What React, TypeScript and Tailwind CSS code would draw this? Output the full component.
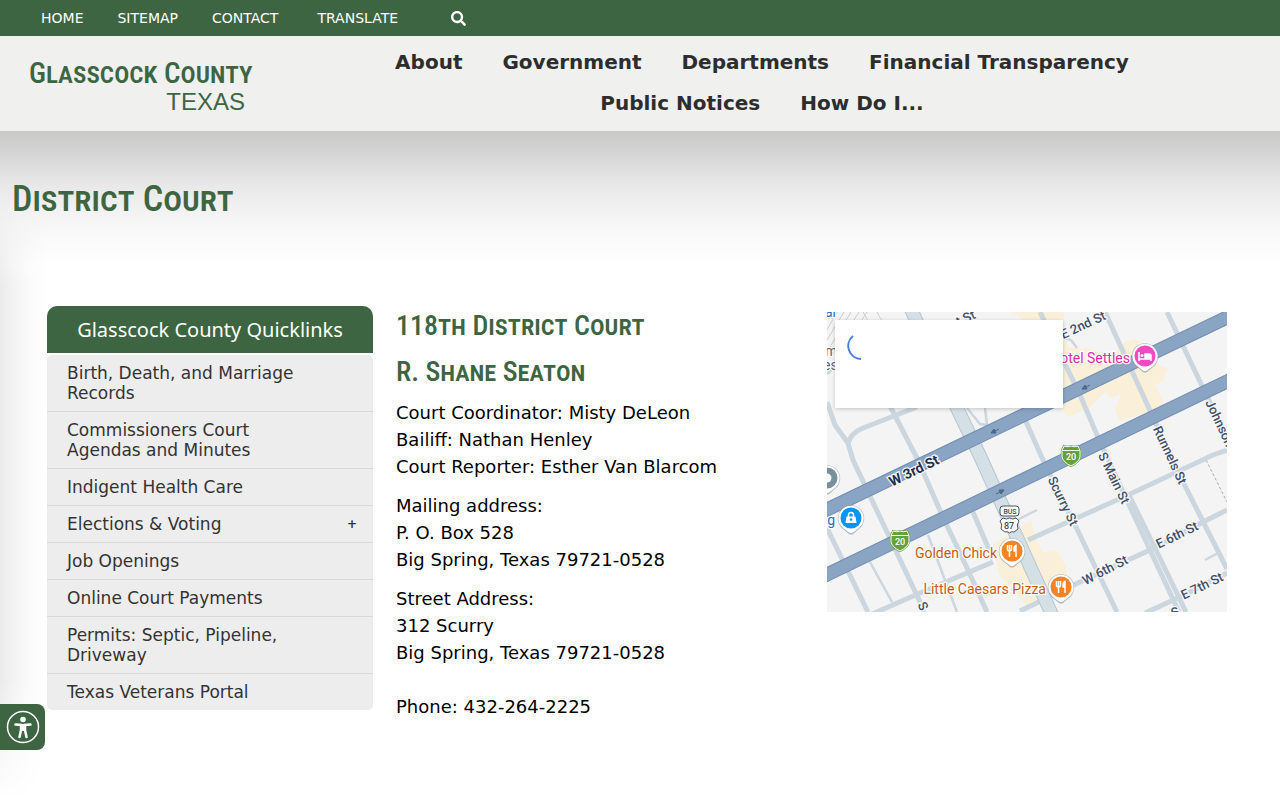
import { FaSearch } from 'react-icons/fa';

const topLinks = [
  { label: 'HOME', className: 'ml-[41px]' },
  { label: 'SITEMAP', className: 'ml-[34px]' },
  { label: 'CONTACT', className: 'ml-[34px]' },
  { label: 'TRANSLATE', className: 'ml-[39px]' },
];

const navLinks = [
  'About',
  'Government',
  'Departments',
  'Financial Transparency',
  'Public Notices',
  'How Do I...',
];

const quicklinks = [
  { label: 'Birth, Death, and Marriage Records' },
  { label: 'Commissioners Court Agendas and Minutes' },
  { label: 'Indigent Health Care' },
  { label: 'Elections & Voting', expandable: true },
  { label: 'Job Openings' },
  { label: 'Online Court Payments' },
  { label: 'Permits: Septic, Pipeline, Driveway' },
  { label: 'Texas Veterans Portal' },
];

const streets = [
  'M0 90L8 113L21 131L26 148L93 290L97 300',
  'M21 131Q24 121 36 116L90 95',
  'M63 94L91 148L115 203L140 256L160 300',
  'M0 216L18 253L41 300',
  'M196 103L216 148L248 213L290 300',
  'M213 0L253 83L273 130L323 238L352 300',
  'M301 181L327 234L359 300',
  'M278 0L325 103L356 170L393 243L400 257',
  'M340 0L376 76L400 126',
  'M43 303L93 281L166 250',
  'M201 228L301 183L386 143L400 138',
  'M193 299L253 270L323 238L380 208L400 198',
  'M318 301L353 285L400 261',
  'M146 200L166 247',
];

const alleys = [
  'M43 250L65 290',
  'M101 223L130 300',
  'M140 96L153 112L160 113L158 96',
  'M0 62L14 50',
  'M378 248L391 241',
  'M190 208L210 198',
  'M236 26L244 28L250 36',
];

function Header() {
  return (
    <header>
      <div className="flex h-9 items-center bg-[#3d6542] text-sm text-white">
        {topLinks.map((link) => (
          <a key={link.label} href="#" className={link.className}>
            {link.label}
          </a>
        ))}
        <button type="button" aria-label="Search" className="ml-[53px]">
          <FaSearch size={15} />
        </button>
      </div>
      <div className="flex h-[95px] bg-[#f0f0ee]">
        <a
          href="#"
          className="ml-[29px] mt-[18px] flex w-[219px] shrink-0 flex-col items-end text-[#3d6542]"
        >
          <span className="self-start whitespace-nowrap font-['Roboto_Condensed','Liberation_Sans',sans-serif] text-[29px] font-medium leading-[38px] [font-variant-caps:small-caps]">
            Glasscock County
          </span>
          <span className="mr-[3px] font-['Liberation_Sans',sans-serif] text-2xl leading-5">TEXAS</span>
        </a>
        <nav className="mx-auto flex max-w-[800px] flex-wrap content-start justify-center gap-x-10 pl-4 pr-5 pt-[6px] text-xl font-bold leading-[41px] text-[#2d2d2d]">
          {navLinks.map((label) => (
            <a key={label} href="#">
              {label}
            </a>
          ))}
        </nav>
      </div>
    </header>
  );
}

function Quicklinks() {
  return (
    <aside className="w-[326px] shrink-0">
      <h2 className="rounded-t-[10px] bg-[#3d6542] text-center font-['Noto_Sans',sans-serif] text-xl leading-[47px] text-white">
        Glasscock County Quicklinks
      </h2>
      <ul className="mt-[2px] rounded-[5px] bg-[#ededed] text-[17px] leading-5 text-[#333]">
        {quicklinks.map((link) => (
          <li key={link.label} className="border-b border-[#d9d9d9] last:border-b-0">
            <a href="#" className="flex items-center justify-between py-2 pl-5 pr-4">
              <span className="max-w-[246px]">{link.label}</span>
              {link.expandable && <span className="text-xs font-bold">+</span>}
            </a>
          </li>
        ))}
      </ul>
    </aside>
  );
}

function Pin({ x, y, color, children }: { x: number; y: number; color: string; children?: React.ReactNode }) {
  return (
    <g transform={`translate(${x} ${y})`}>
      <path d="M-8 11L-2 16Q0 17 2 16L8 11A13.200 13.200 0 1 0 -8 11Z" fill="#8f9aa6" opacity=".7" />
      <path d="M-8 10L-2 14.500Q0 16 2 14.500L8 10A12.600 12.600 0 1 0 -8 10Z" fill="#fff" />
      <circle r="10.500" fill={color} />
      {children}
    </g>
  );
}

function Fork() {
  return (
    <g stroke="#fff" strokeWidth="1.500" fill="none">
      <path d="M-4.500 -6V-2Q-4.500 0 -2.500 0T-.5 -2V-6M-2.500 -6V6" />
      <path d="M4 6V-5.500Q2 -5 2 -2V0H4" fill="#fff" />
    </g>
  );
}

function Shield({ x, y }: { x: number; y: number }) {
  return (
    <g transform={`translate(${x} ${y})`}>
      <path
        d="M-7 -9Q-3 -7.500 0 -9Q3 -7.500 7 -9Q10 -5 9 2Q8 7 0 11Q-8 7 -9 2Q-10 -5 -7 -9Z"
        fill="#66a03f"
        stroke="#66a03f"
        strokeWidth="2"
      />
      <path
        d="M-7 -9Q-3 -7.500 0 -9Q3 -7.500 7 -9Q10 -5 9 2Q8 7 0 11Q-8 7 -9 2Q-10 -5 -7 -9ZM-9 -4.500H9"
        fill="none"
        stroke="#fff"
      />
      <text y="5" textAnchor="middle" fontSize="9" fontWeight="500" fill="#fff">
        20
      </text>
    </g>
  );
}

function CourtMap() {
  return (
    <div className="relative mt-[6px] h-[300px] w-[400px] shrink-0 overflow-hidden bg-[#f4f4f4]">
      <svg viewBox="0 0 400 300" className="h-full w-full font-[Roboto,sans-serif]" role="img" aria-label="Map of Big Spring">
        <g fill="#faf0d9">
          <path d="M186 0H237V22L242 36H262L282 46L298 30L308 27L328 38L330 53L341 56L336 70L328 72L339 96L292 109L288 98L294 82L284 86L278 80L262 96L240 105L234 93L236 40Z" />
          <path d="M166 232L184 222L204 208L210 230L216 240L230 238L238 252L242 270L222 285L200 294L172 262Z" />
        </g>
        <g stroke="#c9cdd1" fill="none">
          <path d="M0 40L24 0M3 46L32 0M8 50L40 0M0 28L17 0M0 18L10 0M36 0L90 96M50 0L104 96" />
          <path d="M379 148L400 190" stroke="#a9abad" strokeDasharray="3 2" />
        </g>
        <g fill="none" stroke="#ccd6de">
          {streets.map((d) => (
            <path key={d} d={d} strokeWidth="5" />
          ))}
          {alleys.map((d) => (
            <path key={d} d={d} strokeWidth="2.500" />
          ))}
        </g>
        <path d="M83 -5L130 96L153 144L226 305" fill="none" stroke="#b5c5d1" strokeWidth="14" />
        <path d="M83 -5L130 96L153 144L226 305" fill="none" stroke="#d5e0e6" strokeWidth="12" />
        <g strokeWidth="14" stroke="#718fb2">
          <path d="M-5 200L405 3" />
          <path d="M-5 265L405 67" />
        </g>
        <g strokeWidth="12" stroke="#8aa4c3">
          <path d="M-5 200L405 3" />
          <path d="M-5 265L405 67" />
        </g>
        <g stroke="#4f6685" fill="#4f6685">
          <path d="M164 121L172 117M167 117L164 121L169 121Z" />
          <path d="M255 77L263 73M258 73L255 77L260 77Z" />
          <path d="M169 182L177 178M172 178L177 178L174 182Z" />
        </g>
        <g
          fill="#3f4f69"
          stroke="#f8f8f8"
          strokeWidth="2.500"
          paintOrder="stroke"
          fontSize="13"
          fontWeight="500"
          textAnchor="middle"
        >
          <text transform="translate(89 163) rotate(-26)" fontSize="14" fontWeight="700" fill="#1f2f4c">
            W 3rd St
          </text>
          <text transform="translate(258 17) rotate(-25)">E 2nd St</text>
          <text transform="translate(134 13) rotate(-25)">1st St</text>
          <text transform="translate(232 191) rotate(64)">Scurry St</text>
          <text transform="translate(283 168) rotate(64)">S Main St</text>
          <text transform="translate(339 145) rotate(65)">Runnels St</text>
          <text transform="translate(392 120) rotate(65)">Johnson St</text>
          <text transform="translate(280 262) rotate(-27)">W 6th St</text>
          <text transform="translate(352 227) rotate(-26)">E 6th St</text>
          <text transform="translate(377 278) rotate(-26)">E 7th St</text>
          <text transform="translate(92 296) rotate(64)">S</text>
          <text transform="translate(350 304) rotate(-25)">S</text>
        </g>
        <g stroke="#fff" strokeWidth="2.500" paintOrder="stroke" fontSize="14">
          <text x="303" y="51" textAnchor="end" fill="#d72fa8">
            Hotel Settles
          </text>
          <text x="170" y="246" textAnchor="end" fill="#c65c12">
            Golden Chick
          </text>
          <text x="219" y="282" textAnchor="end" fill="#c65c12">
            Little Caesars Pizza
          </text>
          <text x="8" y="213" textAnchor="end" fill="#1a73c8">
            g
          </text>
          <text x="-2" y="44" fill="#5c6873">
            m
          </text>
          <text x="-4" y="58" fill="#5c6873">
            es
          </text>
          <text x="-2" y="5" fill="#1a73c8">
            ar
          </text>
        </g>
        <Shield x={244} y={143} />
        <Shield x={73} y={228} />
        <g stroke="#4c5665" fill="#fff">
          <rect x="173" y="194" width="19" height="10" rx="3" />
          <path d="M176 206Q179 208 182.500 206Q186 208 189 206L192 209Q189 213 191 217L187 220Q184 219 182.500 221Q181 219 178 220L174 217Q176 213 173 209Z" />
          <g stroke="none" fill="#3e4856" textAnchor="middle" fontWeight="500">
            <text x="183" y="202" fontSize="7">
              BUS
            </text>
            <text x="182" y="217" fontSize="9">
              87
            </text>
          </g>
        </g>
        <Pin x={318} y={44} color="#f04bc4">
          <path d="M-6 -4V5M-6 3H6V5M6 3V-1Q6 -2 4 -2H0V3" stroke="#fff" strokeWidth="1.500" fill="none" />
          <path d="M0 -2H5L6 0V3H0Z" fill="#fff" />
          <circle cx="-3" cy="-.5" r="1.500" fill="#fff" />
        </Pin>
        <Pin x={24} y={206} color="#0b94f5">
          <path d="M-4.500 -1.500H4.500L5.500 5H-5.500Z" fill="#fff" />
          <path d="M-2.500 -1V-3Q-2.500 -5.500 0 -5.500T2.500 -3V-1" stroke="#fff" strokeWidth="1.500" fill="none" />
          <circle cy="1.500" r="1.300" fill="#0b94f5" />
        </Pin>
        <Pin x={0} y={166} color="#78909c">
          <circle r="4.500" fill="#fff" />
        </Pin>
        <Pin x={185} y={239} color="#f98325">
          <Fork />
        </Pin>
        <Pin x={234} y={275} color="#f98325">
          <Fork />
        </Pin>
      </svg>
      {/* Place card, still loading */}
      <div className="absolute left-2 top-2 h-[88px] w-[228px] bg-white shadow-[0_1px_4px_rgba(0,0,0,0.2)]">
        <svg viewBox="0 0 28 28" className="ml-3 mt-3 size-7" fill="none" stroke="#4a7be0" strokeWidth="2">
          <path d="M6 4A13 13 0 0 0 14 27" />
        </svg>
      </div>
    </div>
  );
}

export default function App() {
  return (
    <div className="min-h-screen bg-white font-['DejaVu_Sans',sans-serif] text-black">
      <Header />
      <main className="relative isolate">
        <div className="pointer-events-none absolute left-0 top-[70px] -z-10 h-[600px] w-12 bg-[linear-gradient(to_right,rgba(0,0,0,0.08),rgba(0,0,0,0.04)_35%,rgba(0,0,0,0.01)_70%,transparent)] [mask-image:linear-gradient(transparent,#000_14%,#000_80%,transparent)]" />
        <div className="h-[135px] bg-[linear-gradient(rgba(0,0,0,0.21),rgba(0,0,0,0.17)_16%,rgba(0,0,0,0.09)_40%,rgba(0,0,0,0.03)_70%,transparent)] pl-3 pt-[42px]">
          <h1 className="font-['Roboto_Condensed','Liberation_Sans',sans-serif] text-4xl font-medium leading-[52px] text-[#3d6542] [font-variant-caps:small-caps]">
            District Court
          </h1>
        </div>
        <div className="flex pl-[47px] pr-[53px] pt-10">
          <Quicklinks />
          <section className="ml-[23px] flex-1 text-lg leading-[27px]">
            <div className="pb-[7px] font-['Roboto_Condensed','Liberation_Sans',sans-serif] text-[28px] font-medium leading-10 text-[#3d6542] [font-variant-caps:small-caps]">
              <h2>118th District Court</h2>
              <h2 className="mt-[6px]">R. Shane Seaton</h2>
            </div>
            <p>
              Court Coordinator: Misty DeLeon
              <br />
              Bailiff: Nathan Henley
              <br />
              Court Reporter: Esther Van Blarcom
            </p>
            <p className="mt-3">
              Mailing address:
              <br />
              P. O. Box 528
              <br />
              Big Spring, Texas 79721-0528
            </p>
            <p className="mt-3">
              Street Address:
              <br />
              312 Scurry
              <br />
              Big Spring, Texas 79721-0528
            </p>
            <p className="mt-[27px]">Phone: 432-264-2225</p>
          </section>
          <CourtMap />
        </div>
      </main>
      <button
        type="button"
        aria-label="Accessibility options"
        className="fixed bottom-[50px] left-0 flex h-[46px] w-[45px] items-center justify-center rounded-r-lg bg-[#3d6542]"
      >
        <svg viewBox="0 0 34 34" className="size-[34px]" fill="none" stroke="#fff">
          <circle cx="17" cy="17" r="15.500" strokeWidth="1.500" />
          <circle cx="17" cy="9.500" r="2.800" fill="#fff" stroke="none" />
          <path d="M9.500 14.500L15 15V20L13.500 27M24.500 14.500L19 15V20L20.500 27" strokeWidth="2.500" strokeLinecap="round" />
          <path d="M14 14H20L19.500 21H14.500Z" fill="#fff" stroke="none" />
        </svg>
      </button>
    </div>
  );
}
